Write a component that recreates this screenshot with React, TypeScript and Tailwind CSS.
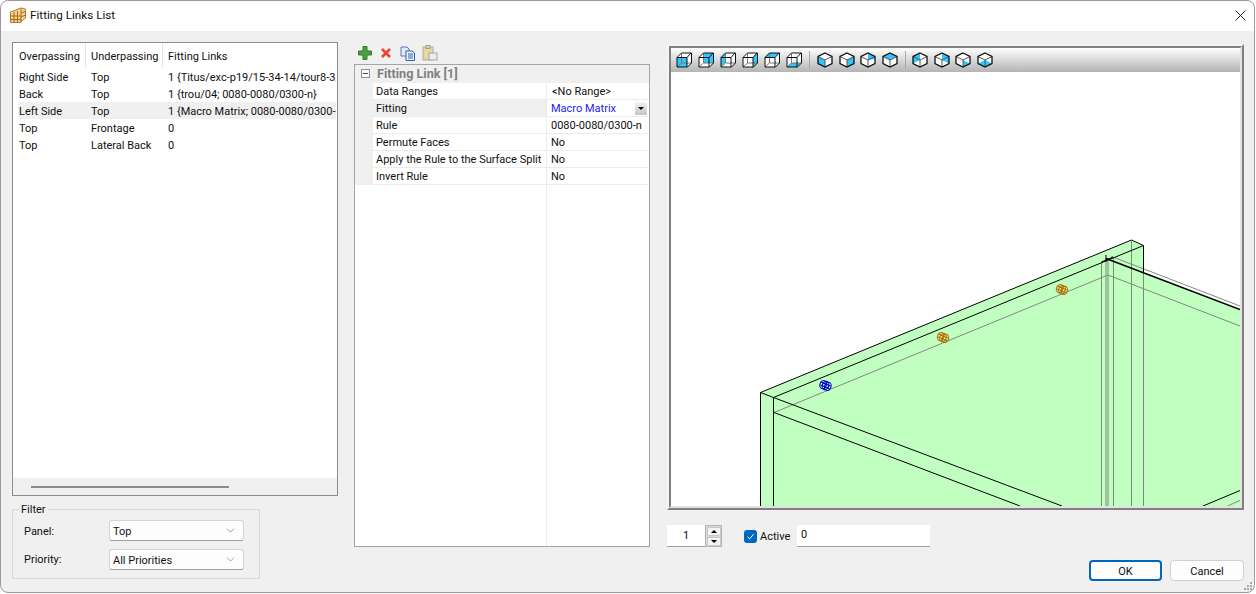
import { ChevronDown } from "lucide-react";

const listRows = [
  ["Right Side", "Top", "1 {Titus/exc-p19/15-34-14/tour8-3/0080-0080/0300-n}"],
  ["Back", "Top", "1 {trou/04; 0080-0080/0300-n}"],
  ["Left Side", "Top", "1 {Macro Matrix; 0080-0080/0300-n}"],
  ["Top", "Frontage", "0"],
  ["Top", "Lateral Back", "0"],
];

const propRows = [
  ["Data Ranges", "<No Range>"],
  ["Fitting", "Macro Matrix"],
  ["Rule", "0080-0080/0300-n"],
  ["Permute Faces", "No"],
  ["Apply the Rule to the Surface Split", "No"],
  ["Invert Rule", "No"],
];

// highlighted face of each box view button
const boxFaces = [
  "1,5 11,5 11,15 1,15",
  "5,1 15,1 15,11 5,11",
  "1,5 5,1 5,11 1,15",
  "15,1 11,5 11,15 15,11",
  "5,1 15,1 11,5 1,5",
  "5,11 15,11 11,15 1,15",
];

const isoFaces = [
  "1,4.5 8,8 8,15 1,11.5",
  "15,4.5 8,8 8,15 15,11.5",
  "8,1 15,4.5 15,7 8,8",
  "1,4.5 8,1 15,4.5 8,8",
];

const isoFacesBack = [
  "8,1 1,4.5 1,11.5 8,8",
  "8,1 15,4.5 15,11.5 8,8",
  "8,8 15,11.5 8,15",
  "1,11.5 8,8 15,11.5 8,15",
];

function BoxIcon({ face }: { face: string }) {
  return (
    <svg width="16" height="16" viewBox="0 0 16 16" className="shrink-0">
      <polygon points="1,5 5,1 15,1 15,11 11,15 1,15" fill="#fff" />
      <polygon points={face} fill="#30c6ff" />
      <path d="M5.5 1.5V11H15M5.5 11L1 15" fill="none" stroke="#777" strokeWidth="1" />
      <path d="M1 5.5H11V15H1ZM1 5.5L5.5 1H15.5V11L11 15.5M11 5.5L15 1" fill="none" stroke="#111" strokeWidth="1" />
    </svg>
  );
}

function IsoIcon({ face }: { face: string }) {
  return (
    <svg width="16" height="16" viewBox="0 0 16 16" className="shrink-0">
      <polygon points="8,1 15,4.5 15,11.5 8,15 1,11.5 1,4.5" fill="#fff" />
      <polygon points={face} fill="#30c6ff" />
      <path d="M8 8L1 4.5M8 8L15 4.5M8 8V15" fill="none" stroke="#555" strokeWidth="1" />
      <polygon points="8,1 15,4.5 15,11.5 8,15 1,11.5 1,4.5" fill="none" stroke="#111" strokeWidth="1.3" />
    </svg>
  );
}

function Fitting({ x, y, color }: { x: number; y: number; color: string }) {
  return (
    <g transform={`translate(${x} ${y}) rotate(22)`} fill="none" stroke={color} strokeWidth="1.1">
      <ellipse cx="-2.5" cy="0" rx="3.2" ry="4.2" />
      <ellipse cx="0" cy="0" rx="3.2" ry="4.2" />
      <ellipse cx="2.5" cy="0" rx="3.2" ry="4.2" />
      <path d="M-5 -1.4H5M-5 1.4H5" />
    </g>
  );
}

function ModelView() {
  return (
    <svg viewBox="671 72 569 434" className="block h-[434px] w-[569px]">
      <polygon
        points="760.5,392.5 1131.5,240 1143.5,245.5 1143.5,273 1240,309.5 1240,506 760.5,506"
        fill="#c0ffc0"
      />
      <g fill="none" stroke="#7f8a7f" strokeWidth="1">
        <path d="M774 412.5L1108 275L1240 326" />
        <path d="M1111.5 256.5L1240 306" />
        <path d="M1101.5 262V506M1106 258V506M1108 258V506M1113.5 258V506M1131.5 240V506M1143.5 273V506" />
        <path d="M1227.5 506L1240 500.5" />
      </g>
      <g fill="none" stroke="#000" strokeWidth="1">
        <path d="M760.5 506V392.5L1131.5 240L1143.5 245.5V273" />
        <path d="M760.5 392.5L773.5 397.5V506" />
        <path d="M773.5 397.5L1143.5 245.5" />
        <path d="M773.5 397.5L1062 506" />
        <path d="M774 412.5L1020 506" />
        <path d="M1106 258.5L1240 309.5" strokeWidth="1.5" />
        <path d="M1101.5 262L1113 257M1106 255V262" />
        <path d="M1203 506L1240 490.5" />
      </g>
      <Fitting x={825.5} y={385.5} color="#0000c8" />
      <Fitting x={943} y={337.5} color="#b86e00" />
      <Fitting x={1062} y={289.5} color="#b86e00" />
    </svg>
  );
}

function Select({ value }: { value: string }) {
  return (
    <div className="flex h-[21px] w-[135px] items-center justify-between rounded-[3px] border border-[#d5d5d5] border-b-[#a0a0a0] bg-[#fdfdfd] pl-[3px] pr-[6px]">
      <span className="pt-[2px]">{value}</span>
      <ChevronDown className="size-[13px] text-[#555]" strokeWidth={1} />
    </div>
  );
}

export default function App() {
  return (
    <div className="h-[594px] w-[1256px] overflow-hidden bg-white font-['Roboto',sans-serif] text-[11px] leading-[17px] text-[#101010]">
      <div className="relative flex h-[593px] w-[1255px] flex-col rounded-[8px] border border-[#9a9a9a] bg-[#f0f0f0]">
        {/* Title bar */}
        <div className="flex h-[30px] shrink-0 items-center justify-between rounded-t-[8px] bg-white pb-[2px] pl-[9px] pr-[8px]">
          <div className="flex items-center gap-[4px]">
            <svg width="16" height="16" viewBox="0 0 16 16">
              <polygon points="0.5,5 11,1 15.5,2 15.5,11 10,15.5 0.5,15.5" fill="#f4d590" stroke="#b9772a" />
              <path d="M0.5 9H11M0.5 12.5H11M4 5V15.5M7.5 4V15.5M11 2V15.5M11 6L15.5 4.5M11 10L15.5 8" fill="none" stroke="#a8641c" />
            </svg>
            <span className="text-[11.7px]">Fitting Links List</span>
          </div>
          <svg width="11" height="11" viewBox="0 0 11 11">
            <path d="M0.5 0.5L10.5 10.5M10.5 0.5L0.5 10.5" stroke="#222" strokeWidth="1" />
          </svg>
        </div>

        <div className="flex items-start pl-[11px] pt-[11px]">
          {/* Left column */}
          <div className="flex w-[326px] shrink-0 flex-col">
            <div className="flex h-[454px] flex-col overflow-hidden border border-[#8c8c8c] bg-white">
              <div className="flex h-[25px] shrink-0 items-center pr-[1px]">
                <div className="flex h-[25px] w-[73px] items-center border-r border-[#e5e5e5] pl-[6px] pt-[2px]">Overpassing</div>
                <div className="flex h-[25px] w-[77px] items-center border-r border-[#e5e5e5] pl-[5px] pt-[2px]">Underpassing</div>
                <div className="pl-[5px] pt-[2px]">Fitting Links</div>
              </div>
              <div className="flex-1 pl-[5px] pr-[1px]">
                {listRows.map((row, i) => (
                  <div
                    key={i}
                    className={`flex h-[17px] items-center overflow-hidden whitespace-nowrap pt-[2px] ${i === 2 ? "bg-[#f0f0f0]" : ""}`}
                  >
                    <div className="w-[1px] shrink-0" />
                    <div className="w-[72px] shrink-0">{row[0]}</div>
                    <div className="w-[77px] shrink-0">{row[1]}</div>
                    <div>{row[2]}</div>
                  </div>
                ))}
              </div>
              <div className="flex h-[17px] shrink-0 items-center bg-[#f0f0f0] pl-[18px]">
                <div className="h-[2px] w-[198px] bg-[#8a8a8a]" />
              </div>
            </div>

            <fieldset className="mt-[6px] h-[77px] w-[248px] rounded-[1px] border border-[#d9d9d9] pl-[11px]">
              <legend className="ml-[-5px] h-[15px] px-[2px] leading-[15px]">Filter</legend>
              <div className="mt-[3px] flex flex-col gap-[8px]">
                <div className="flex items-center">
                  <span className="w-[85px] pt-[2px]">Panel:</span>
                  <Select value="Top" />
                </div>
                <div className="flex items-center">
                  <span className="w-[85px]">Priority:</span>
                  <Select value="All Priorities" />
                </div>
              </div>
            </fieldset>
          </div>

          {/* Properties column */}
          <div className="ml-[16px] flex w-[296px] shrink-0 flex-col">
            <div className="flex h-[22px] items-center gap-[7px] pl-[4px]">
              <svg width="14" height="14" viewBox="0 0 14 14">
                <path d="M5 0.5H9V5H13.5V9H9V13.5H5V9H0.5V5H5Z" fill="#4aa23f" stroke="#2f7d2b" />
              </svg>
              <svg width="14" height="14" viewBox="0 0 14 14">
                <path d="M3 3L11 11M11 3L3 11" stroke="#e8452c" strokeWidth="2.6" />
              </svg>
              <svg width="15" height="15" viewBox="0 0 15 15">
                <path d="M1 1H7L9 3V10H1Z" fill="#dfe8f6" stroke="#5b7db5" />
                <path d="M6 5H12L14.5 7V14.5H6Z" fill="#f2f6fc" stroke="#2b5fae" />
                <path d="M8 8H13M8 10H13M8 12H13" stroke="#2b5fae" />
              </svg>
              <svg width="16" height="16" viewBox="0 0 16 16">
                <rect x="1" y="2" width="10" height="13" fill="#e8d6a5" stroke="#b7ab8c" />
                <rect x="4" y="0.5" width="4" height="3" fill="#d5d0c0" stroke="#a5a08f" />
                <rect x="7" y="8" width="8" height="7" fill="#e9ebee" stroke="#a5a8ad" />
              </svg>
            </div>
            <div className="flex h-[483px] flex-col border border-[#a5a5a5] bg-white">
              <div className="flex h-[18px] shrink-0 items-center bg-[#f0f0f0] pb-[1px] pl-[6px]">
                <div className="flex size-[9px] items-center justify-center border border-[#909090] bg-white">
                  <div className="h-[1px] w-[5px] bg-[#444]" />
                </div>
                <span className="ml-[7px] text-[12.6px] font-bold leading-[15px] text-[#808080]">Fitting Link [1]</span>
              </div>
              {propRows.map((row, i) => (
                <div key={i} className="flex h-[17px] shrink-0">
                  <div className="w-[18px] shrink-0 bg-[#f0f0f0]" />
                  <div
                    className={`flex w-[174px] shrink-0 items-center whitespace-nowrap border-b border-r border-[#ececec] pl-[3px] pt-[1px] ${i === 1 ? "bg-[#f0f0f0]" : ""}`}
                  >
                    {row[0]}
                  </div>
                  <div
                    className={`flex min-w-0 flex-1 items-center justify-between whitespace-nowrap border-b border-[#ececec] pr-[2px] pt-[1px] ${i === 1 ? "text-[#1a1aff]" : ""} ${i === 0 ? "pl-[5px]" : "pl-[4px]"}`}
                  >
                    <span>{row[1]}</span>
                    {i === 1 && (
                      <div className="flex h-[13px] w-[12px] items-center justify-center bg-gradient-to-b from-[#f4f4f4] to-[#c4c4c4]">
                        <div className="h-0 w-0 border-x-[3px] border-t-[3px] border-x-transparent border-t-black" />
                      </div>
                    )}
                  </div>
                </div>
              ))}
              <div className="w-[192px] flex-1 border-r border-[#ececec]" />
            </div>
          </div>

          {/* Viewer column */}
          <div className="ml-[17px] mt-[2px] flex w-[577px] shrink-0 flex-col">
            <div className="border-2 border-b-[#808080] border-l-[#f4f4f4] border-r-[#808080] border-t-[#f4f4f4]">
              <div className="border-2 border-b-[#e2e2e2] border-l-[#808080] border-r-[#e2e2e2] border-t-[#808080] bg-white">
                <div className="flex h-[24px] items-center bg-gradient-to-b from-white to-[#b4b4b4] pl-[5px]">
                  <div className="flex gap-[6px]">
                    {boxFaces.map((f) => (
                      <BoxIcon key={f} face={f} />
                    ))}
                  </div>
                  <div className="mx-[7px] h-[18px] w-[1px] bg-[#a8a8a8]" />
                  <div className="flex gap-[5.7px]">
                    {isoFaces.map((f) => (
                      <IsoIcon key={f} face={f} />
                    ))}
                  </div>
                  <div className="mx-[6.5px] h-[18px] w-[1px] bg-[#a8a8a8]" />
                  <div className="flex gap-[5.7px]">
                    {isoFacesBack.map((f) => (
                      <IsoIcon key={f} face={f} />
                    ))}
                  </div>
                </div>
                <ModelView />
              </div>
            </div>

            <div className="mt-[15px] flex h-[22px] items-center">
              <div className="flex h-[22px] w-[38px] items-center justify-center border-b border-[#a0a0a0] bg-white">1</div>
              <div className="flex h-[22px] w-[17px] flex-col items-center justify-center gap-[1px] border border-[#b4b4b4] bg-[#d8d8d8]">
                <div className="flex h-[9px] w-[14px] items-center justify-center border border-[#c8c8c8] bg-[#f4f4f4]">
                  <div className="h-0 w-0 border-x-[3px] border-b-[3px] border-x-transparent border-b-black" />
                </div>
                <div className="flex h-[9px] w-[14px] items-center justify-center border border-[#c8c8c8] bg-[#f4f4f4]">
                  <div className="h-0 w-0 border-x-[3px] border-t-[3px] border-x-transparent border-t-black" />
                </div>
              </div>
              <div className="ml-[22px] flex size-[13px] items-center justify-center rounded-[3px] bg-[#0067c0]">
                <svg width="9" height="9" viewBox="0 0 9 9">
                  <path d="M1.5 4.8L3.6 6.8L7.6 2.2" fill="none" stroke="#fff" strokeWidth="1" />
                </svg>
              </div>
              <span className="ml-[3px] w-[30px] whitespace-nowrap">Active</span>
              <div className="ml-[7px] flex h-[22px] w-[133px] items-center border-b border-[#a0a0a0] bg-white pb-[2px] pl-[4px]">0</div>
            </div>

            <div className="mt-[13px] flex justify-end gap-[8px]">
              <button className="h-[21px] w-[73px] rounded-[4px] border-2 border-[#0067c0] bg-[#fdfdfd] pt-[1px] leading-[15px]">OK</button>
              <button className="h-[21px] w-[74px] rounded-[4px] border border-[#d0d0d0] bg-[#fdfdfd] pt-[2px]">Cancel</button>
            </div>
          </div>
        </div>

        {/* Resize grip */}
        <svg width="9" height="9" viewBox="0 0 9 9" className="absolute bottom-[1px] right-[1px]">
          <path d="M6 0h2v2H6zM3 3h2v2H3zM6 3h2v2H6zM0 6h2v2H0zM3 6h2v2H3zM6 6h2v2H6z" fill="#a8a8a8" />
        </svg>
      </div>
    </div>
  );
}
